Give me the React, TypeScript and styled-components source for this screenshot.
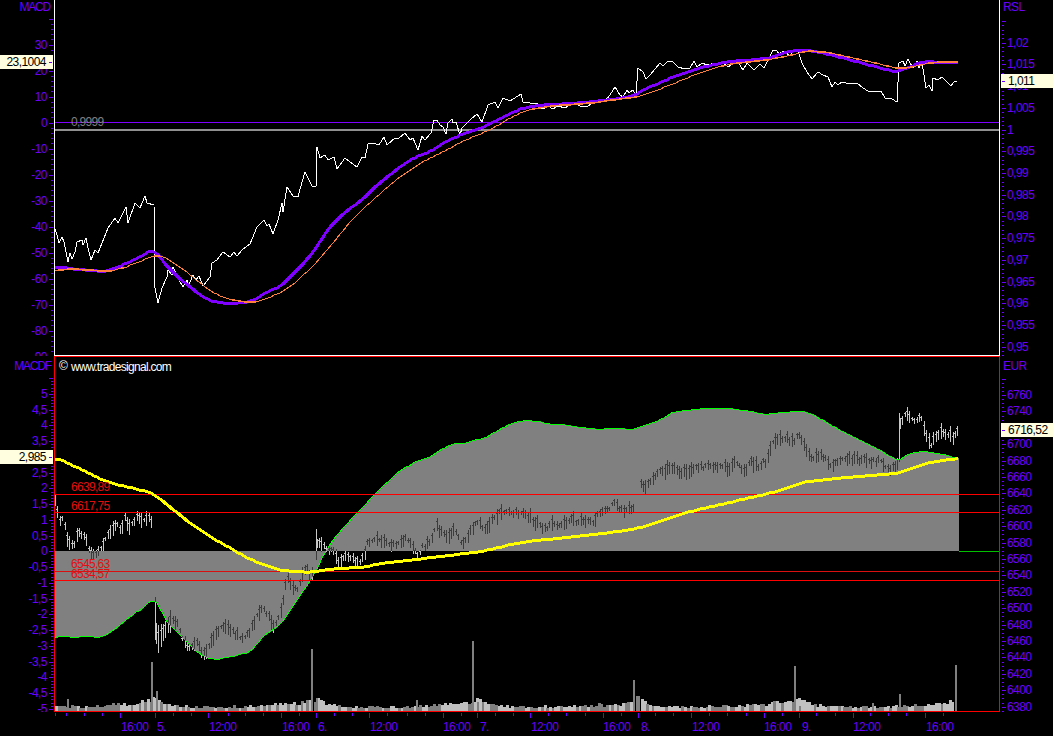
import { FC } from 'react';
import styled, { createGlobalStyle } from 'styled-components';

const PURPLE = '#6a00ff';
const VIOLET = '#8000ff';
const ORANGE = '#ff7f3f';
const AREA = '#808080';
const CREAM = '#ffffe0';
const FONT = '"Liberation Sans", Arial, sans-serif';

type Pt = [number, number];

const GlobalStyle = createGlobalStyle`
  html, body {
    margin: 0;
    background: #000;
    overflow: hidden;
  }
`;

const Screen = styled.div`
  display: grid;
  grid-template-rows: 356px 356px 24px;
  width: 1053px;
  height: 736px;
  background: #000;
`;

const Pane = styled.div`
  display: grid;
  grid-template-columns: 54px 946px 53px;
  min-height: 0;
`;

const ScaleColumn = styled.div`
  position: relative;
  overflow: hidden;
`;

const PlotFrame = styled.div<{ $edge: string; $top?: string; $bottom: string }>`
  border-left: 1px solid ${(p) => p.$edge};
  border-right: 1px solid ${(p) => p.$edge};
  border-top: ${(p) => (p.$top ? `1px solid ${p.$top}` : 'none')};
  border-bottom: 1px solid ${(p) => p.$bottom};
  min-height: 0;
`;

const Drawing = styled.svg`
  display: block;
  width: 100%;
  height: 100%;
`;

const ScaleText = styled.text<{ $tight?: boolean }>`
  font: 12px ${FONT};
  letter-spacing: ${(p) => (p.$tight ? '-1.2px' : '-0.55px')};
  fill: ${PURPLE};
`;

const PlotText = styled.text<{ $color: string }>`
  font: 12px ${FONT};
  letter-spacing: -0.7px;
  fill: ${(p) => p.$color};
`;

const Badge = styled.div<{ $side: 'left' | 'right'; $top: number }>`
  position: absolute;
  top: ${(p) => p.$top}px;
  height: 14px;
  display: flex;
  align-items: center;
  box-sizing: border-box;
  background: ${CREAM};
  color: #000;
  font: 12px/14px ${FONT};
  letter-spacing: -0.55px;
  ${(p) =>
    p.$side === 'left'
      ? 'left: 0; width: 53px; flex-direction: row-reverse; padding-right: 1px;'
      : 'left: 1px; right: 0; padding-left: 1px;'}
`;

const BadgeTick = styled.span<{ $side: 'left' | 'right' }>`
  width: 3px;
  height: 1px;
  flex: none;
  background: ${PURPLE};
  ${(p) => (p.$side === 'left' ? 'margin-left: 3px;' : 'margin-right: 3px;')}
`;

const pts = (a: Pt[]) => a.map((p) => p.join(',')).join(' ');

const WHITE_LINE: Pt[] = [
  [55, 229], [57, 235], [59, 243], [62, 237], [64, 242], [68, 262], [70, 253], [72, 259], [75, 252], [77, 242],
  [82, 240], [83, 245], [86, 238], [88, 248], [91, 260], [95, 250], [98, 253], [102, 243], [108, 228], [115, 218],
  [118, 223], [123, 213], [126, 207], [128, 223], [135, 203], [140, 208], [145, 196], [147, 203], [154, 205], [155, 288],
  [158, 303], [162, 288], [167, 277], [168, 270], [172, 275], [173, 267], [178, 278], [183, 287], [187, 280], [188, 287],
  [193, 275], [196, 280], [199, 276], [203, 286], [210, 277], [212, 263], [217, 260], [223, 252], [230, 257], [234, 252],
  [237, 256], [243, 249], [250, 244], [257, 227], [264, 220], [267, 226], [269, 224], [273, 234], [278, 220], [282, 203],
  [283, 212], [287, 187], [293, 196], [298, 197], [302, 182], [305, 172], [312, 186], [316, 186], [317, 147], [320, 158],
  [325, 155], [328, 160], [334, 157], [337, 169], [345, 158], [350, 162], [357, 167], [362, 157], [365, 158], [368, 144],
  [373, 143], [379, 145], [384, 137], [387, 145], [395, 138], [398, 139], [405, 133], [410, 140], [413, 138], [418, 150],
  [422, 136], [425, 140], [431, 133], [434, 120], [437, 120], [440, 125], [443, 127], [446, 134], [448, 123], [452, 119],
  [453, 123], [456, 122], [460, 135], [462, 128], [470, 120], [477, 114], [482, 122], [488, 105], [495, 102], [498, 108],
  [503, 98], [510, 101], [521, 94], [523, 102], [530, 103], [537, 103], [539, 108], [545, 108], [548, 106], [553, 109],
  [558, 106], [565, 108], [573, 103], [580, 106], [588, 106], [595, 101], [605, 101], [610, 95], [615, 87], [620, 95],
  [623, 97], [627, 90], [629, 93], [633, 90], [636, 95], [638, 68], [643, 72], [646, 79], [650, 75], [655, 69],
  [660, 63], [663, 66], [668, 61], [673, 62], [678, 67], [685, 69], [690, 68], [694, 61], [697, 67], [702, 63],
  [707, 65], [715, 63], [723, 63], [728, 67], [735, 62], [738, 62], [743, 70], [747, 63], [754, 70], [760, 64],
  [764, 68], [773, 50], [777, 51], [779, 54], [784, 51], [790, 56], [795, 49], [798, 51], [802, 63], [807, 72],
  [812, 79], [818, 72], [823, 75], [828, 77], [832, 87], [835, 82], [838, 85], [842, 82], [850, 84], [857, 83],
  [863, 88], [868, 91], [881, 91], [885, 98], [892, 99], [897, 102], [899, 63], [903, 61], [905, 66], [908, 59],
  [913, 68], [917, 61], [919, 68], [922, 62], [926, 88], [929, 85], [932, 91], [933, 78], [938, 80], [942, 77],
  [947, 82], [951, 86], [954, 82], [957, 81],
];

const VIOLET_RAW: Pt[] = [
  [55, 267], [63, 267], [73, 269], [93, 270], [103, 272], [113, 269], [127, 263], [140, 257], [154, 248], [160, 258],
  [173, 273], [190, 287], [203, 297], [213, 302], [230, 303], [250, 302], [258, 298], [268, 291], [280, 287], [290, 277],
  [302, 265], [315, 250], [323, 237], [333, 223], [348, 210], [363, 199], [377, 185], [393, 172], [415, 157], [430, 152],
  [443, 143], [460, 135], [477, 130], [493, 122], [507, 115], [523, 108], [538, 105], [573, 103], [597, 101], [613, 99],
  [633, 96], [647, 88], [660, 83], [672, 77], [687, 72], [707, 66], [730, 61], [760, 59], [773, 57], [787, 52],
  [800, 49], [820, 52], [847, 59], [873, 66], [897, 72], [913, 66], [923, 61], [940, 62], [958, 62],
];

const ORANGE_RAW: Pt[] = [
  [55, 271], [67, 269], [93, 270], [107, 272], [120, 269], [137, 263], [150, 257], [158, 255], [167, 258], [183, 269],
  [200, 283], [217, 295], [233, 300], [243, 302], [258, 302], [280, 293], [293, 285], [317, 262], [337, 238], [353, 218],
  [373, 200], [393, 182], [420, 163], [443, 152], [463, 141], [490, 130], [510, 118], [527, 110], [550, 106], [593, 103],
  [620, 99], [637, 97], [653, 92], [670, 85], [687, 78], [707, 70], [730, 64], [767, 60], [787, 56], [807, 51],
  [827, 52], [853, 58], [880, 64], [900, 69], [913, 67], [923, 64], [940, 62], [958, 62],
];

const MACDF_RAW: Pt[] = [
  [55, 637], [62, 636], [73, 637], [88, 636], [95, 637], [102, 637], [110, 633], [120, 625], [128, 618], [138, 611],
  [142, 609], [148, 603], [154, 598], [157, 603], [167, 622], [183, 638], [197, 652], [208, 658], [218, 659], [233, 656],
  [250, 652], [265, 635], [282, 623], [297, 600], [313, 577], [325, 552], [335, 537], [357, 513], [377, 492], [398, 472],
  [415, 462], [428, 458], [440, 450], [455, 443], [465, 443], [487, 437], [497, 431], [512, 423], [527, 420], [537, 421],
  [550, 424], [560, 424], [580, 427], [597, 429], [613, 428], [635, 429], [640, 427], [660, 420], [673, 412], [687, 410],
  [707, 408], [727, 408], [743, 410], [765, 414], [783, 412], [802, 411], [810, 413], [843, 432], [880, 450], [898, 461],
  [910, 453], [923, 451], [937, 453], [958, 458],
];

const YELLOW_RAW: Pt[] = [
  [55, 457], [67, 463], [83, 470], [102, 480], [115, 484], [133, 488], [153, 493], [170, 507], [190, 523], [210, 537],
  [227, 546], [247, 558], [267, 566], [280, 570], [297, 571], [310, 572], [317, 571], [337, 568], [363, 567], [383, 563],
  [417, 559], [450, 555], [483, 551], [517, 543], [537, 540], [560, 538], [587, 535], [613, 532], [638, 528], [660, 522],
  [680, 514], [700, 509], [727, 503], [747, 498], [767, 494], [787, 488], [803, 482], [827, 479], [860, 476], [898, 473],
  [913, 468], [927, 463], [958, 458],
];

const PRICE_PATH: Pt[] = [
  [55, 502], [57, 510], [60, 520], [63, 517], [66, 537], [70, 543], [75, 543], [78, 530], [82, 535], [85, 538],
  [90, 552], [93, 555], [98, 552], [103, 543], [110, 532], [115, 523], [120, 530], [125, 517], [130, 530], [137, 513],
  [142, 522], [147, 515], [153, 523], [156, 640], [158, 640], [165, 630], [170, 620], [177, 623], [183, 643], [190, 647],
  [198, 640], [203, 657], [212, 640], [220, 628], [228, 630], [240, 637], [250, 632], [258, 613], [265, 610], [273, 627],
  [282, 607], [287, 577], [293, 587], [298, 588], [305, 567], [312, 577], [317, 543], [323, 547], [332, 550], [338, 563],
  [347, 555], [357, 563], [363, 558], [368, 540], [383, 540], [393, 545], [405, 538], [417, 553], [423, 547], [433, 537],
  [435, 525], [447, 538], [453, 528], [462, 543], [470, 532], [478, 520], [483, 532], [493, 517], [503, 512], [520, 513],
  [530, 518], [542, 527], [557, 525], [573, 520], [593, 522], [600, 513], [615, 503], [623, 512], [628, 507], [637, 512],
  [639, 482], [645, 488], [660, 472], [673, 468], [687, 473], [693, 467], [717, 465], [728, 468], [735, 462], [744, 472],
  [750, 462], [757, 467], [767, 460], [773, 440], [787, 438], [793, 442], [798, 435], [805, 448], [810, 460], [820, 455],
  [833, 465], [850, 458], [870, 462], [880, 460], [887, 468], [898, 468], [900, 420], [908, 415], [913, 422], [922, 418],
  [926, 437], [930, 445], [937, 433], [942, 432], [952, 437], [957, 431],
];

const makeRandom = (seed: number) => () => {
  seed = (seed * 16807) % 2147483647;
  return seed / 2147483647;
};

const lerp = (path: Pt[], x: number) => {
  for (let i = 1; i < path.length; i++) {
    if (x <= path[i][0]) {
      const [x0, y0] = path[i - 1];
      const [x1, y1] = path[i];
      return y0 + ((y1 - y0) * (x - x0)) / (x1 - x0);
    }
  }
  return path[path.length - 1][1];
};

// resample every 3px and average a little, the readings above are coarse
const smooth = (path: Pt[], radius = 2): Pt[] => {
  const first = path[0][0];
  const last = path[path.length - 1][0];
  const out: Pt[] = [];
  for (let x = first; x <= last; x += 3) {
    let sum = 0;
    let n = 0;
    for (let k = -radius; k <= radius; k++) {
      const sx = x + k * 3;
      if (sx < first || sx > last) continue;
      sum += lerp(path, sx);
      n++;
    }
    out.push([x, Math.round(sum / n)]);
  }
  out.push(path[path.length - 1]);
  return out;
};

const VIOLET_LINE = smooth(VIOLET_RAW);
const ORANGE_LINE = smooth(ORANGE_RAW);
const MACDF_CURVE = smooth(MACDF_RAW, 1);
const YELLOW_LINE = smooth(YELLOW_RAW);

const GAPS: Pt[] = [[152, 156], [312, 317], [635, 639], [896, 900]];

const buildPriceBars = () => {
  const rand = makeRandom(4711);
  let d = 'M155 597V640M899 413V462M316 529V560M897 458V470';
  for (let x = 55; x < 958; x += 2.4) {
    const px = Math.round(x);
    if (GAPS.some(([a, b]) => px > a && px < b)) continue;
    const mid = lerp(PRICE_PATH, x) + (rand() - 0.5) * 5;
    const half = px > 155 && px < 172 ? 8 + rand() * 8 : 2 + rand() * 6;
    const hi = Math.round(mid - half);
    const lo = Math.round(mid + half);
    d += `M${px} ${hi}V${lo}`;
    d += `M${px - 1} ${Math.round(mid - half / 2)}h1M${px} ${Math.round(mid + half / 2)}h1`;
  }
  return d;
};

type VolumeBar = { x: number; top: number; light: boolean };

const OPENS = [155, 316, 477, 638, 799];
const SPIKES: Record<number, number> = {
  67: 699, 151: 662, 156: 691, 311: 649, 316: 698, 416: 700, 472: 641, 477: 702,
  633: 680, 638: 696, 794: 666, 799: 706, 872: 703, 899: 694, 955: 665,
};

const buildVolume = () => {
  const rand = makeRandom(90210);
  const out: VolumeBar[] = [];
  for (let x = 55; x < 954; x += 2.7) {
    const px = Math.round(x);
    const open = [...OPENS].reverse().find((o) => o <= px) ?? -6;
    const t = (px - open) / 156;
    const h = 2.5 + rand() * 3 + 9 * Math.exp(-(px - open) / 10) + 6 * Math.pow(t, 5) * (0.6 + rand());
    const light = rand() < (t < 0.25 || t > 0.8 ? 0.7 : 0.3);
    out.push({ x: px, top: Math.round(711 - h), light });
  }
  Object.entries(SPIKES).forEach(([x, top]) => {
    out.push({ x: Number(x), top, light: false });
  });
  return out;
};

const PRICE_BARS = buildPriceBars();
const VOLUME = buildVolume();
const AREA_POINTS: Pt[] = [[55, 551], ...MACDF_CURVE, [959, 458], [959, 551]];

type ScaleProps = {
  side: 'left' | 'right';
  viewBox: string;
  title: string;
  titleAt: [number, number];
  labels: { text: string; y: number }[];
  firstTick: number;
  step: number;
  lastTick: number;
  majorEvery: number;
};

const Scale: FC<ScaleProps> = ({ side, viewBox, title, titleAt, labels, firstTick, step, lastTick, majorEvery }) => {
  const ticks: { y: number; major: boolean }[] = [];
  for (let i = 0; firstTick + i * step < lastTick; i++) {
    ticks.push({ y: Math.round(firstTick + i * step), major: i % majorEvery === 0 });
  }
  const left = side === 'left';
  return (
    <Drawing viewBox={viewBox} preserveAspectRatio="none">
      <ScaleText x={titleAt[0]} y={titleAt[1]} textAnchor={left ? 'end' : 'start'} $tight={left}>
        {title}
      </ScaleText>
      {ticks.map((t) => {
        const len = t.major ? 4 : 2;
        return (
          <rect
            key={t.y}
            x={left ? 53 - len : 1002}
            y={t.y}
            width={len}
            height={1}
            fill={PURPLE}
          />
        );
      })}
      {labels.map((l) => (
        <ScaleText key={l.text} x={left ? 47 : 1007} y={l.y + 4} textAnchor={left ? 'end' : 'start'}>
          {l.text}
        </ScaleText>
      ))}
    </Drawing>
  );
};

const comma = (v: number) => String(parseFloat(v.toFixed(3))).replace('.', ',');

const MACD_LABELS = Array.from({ length: 13 }, (_, i) => {
  const v = 30 - i * 10;
  return { text: comma(v), y: 122.5 - 2.6 * v };
});
const RSL_LABELS = Array.from({ length: 15 }, (_, i) => ({
  text: comma(1.02 - i * 0.005),
  y: 42.7 + i * 21.72,
}));
// the value badges cover "3" and "6720" completely
const MACDF_LABELS = Array.from({ length: 21 }, (_, i) => {
  const v = 5 - i * 0.5;
  return { text: comma(v), y: 551.3 - 31.5 * v };
}).filter((l) => l.text !== '3');
const EUR_LABELS = Array.from({ length: 20 }, (_, i) => ({
  text: String(6760 - i * 20),
  y: 395 + i * 16.4,
})).filter((l) => l.text !== '6720');

const MAJOR_TIME = [120, 155, 208, 281, 316, 369, 443, 477, 530, 603, 638, 691, 764, 799, 853, 925];
const MINOR_TIME = [
  55, 66, 84, 102, 173, 191, 228, 245, 263, 299, 334, 352, 387, 407, 425, 461, 495, 513, 548, 566, 585, 621, 655, 673,
  709, 727, 746, 782, 816, 835, 870, 888, 906, 943,
];
const TIME_LABELS: [string, number][] = [
  ['16:00', 121], ['5.', 157], ['12:00', 209], ['16:00', 282], ['6.', 318], ['12:00', 370], ['16:00', 443], ['7.', 480],
  ['12:00', 531], ['16:00', 603], ['8.', 641], ['12:00', 692], ['16:00', 764], ['9.', 802], ['12:00', 853], ['16:00', 926],
];

const TopPlot: FC = () => (
  <Drawing viewBox="55 0 944 355" preserveAspectRatio="none" shapeRendering="crispEdges">
    <rect x={55} y={122} width={944} height={1} fill={VIOLET} />
    <rect x={55} y={129} width={944} height={2} fill="#909090" />
    <PlotText x={71} y={126} $color="#808080">0,9999</PlotText>
    <polyline points={pts(WHITE_LINE)} fill="none" stroke="#fff" strokeWidth={1} />
    <polyline points={pts(VIOLET_LINE)} fill="none" stroke={VIOLET} strokeWidth={3} />
    <polyline points={pts(ORANGE_LINE)} fill="none" stroke={ORANGE} strokeWidth={1.2} />
  </Drawing>
);

const BottomPlot: FC = () => (
  <Drawing viewBox="55 357 944 354" preserveAspectRatio="none" shapeRendering="crispEdges">
    <defs>
      <clipPath id="area-clip">
        <polygon points={pts(AREA_POINTS)} />
      </clipPath>
    </defs>
    <polygon points={pts(AREA_POINTS)} fill={AREA} />
    <polyline points={pts(MACDF_CURVE)} fill="none" stroke="#00ff00" strokeWidth={1} />
    <rect x={959} y={551} width={40} height={1} fill="#00c000" />
    {VOLUME.map((v, i) => (
      <rect key={i} x={v.x} y={v.top} width={v.x in SPIKES ? 2 : 3} height={711 - v.top} fill={v.light ? '#c0c0c0' : AREA} />
    ))}
    <path d={PRICE_BARS} fill="none" stroke="#c8c8c8" strokeWidth={1} />
    <path d={PRICE_BARS} fill="none" stroke="#3c3c3c" strokeWidth={1} clipPath="url(#area-clip)" />
    <rect x={55} y={494} width={944} height={1} fill="#ff0000" />
    <rect x={55} y={512} width={944} height={1} fill="#ff0000" />
    <rect x={55} y={571} width={944} height={1} fill="#d81010" />
    <rect x={55} y={580} width={944} height={1} fill="#ff0000" />
    <polyline points={pts(YELLOW_LINE)} fill="none" stroke="#ffff00" strokeWidth={3} />
    <PlotText x={71} y={491} $color="#e01010">6639,89</PlotText>
    <PlotText x={71} y={510} $color="#e01010">6617,75</PlotText>
    <PlotText x={71} y={568} $color="#e01010">6545,63</PlotText>
    <PlotText x={71} y={578} $color="#e01010">6534,57</PlotText>
    <PlotText x={59} y={370} $color="#fff">©</PlotText>
    <PlotText x={71} y={371} $color="#fff">www.tradesignal.com</PlotText>
  </Drawing>
);

const TimeAxis: FC = () => (
  <Drawing viewBox="0 712 1053 24" preserveAspectRatio="none">
    {MINOR_TIME.map((x) => (
      <rect key={x} x={x} y={713} width={1} height={3} fill={PURPLE} />
    ))}
    {MAJOR_TIME.map((x) => (
      <rect key={x} x={x} y={713} width={1} height={5} fill={PURPLE} />
    ))}
    {TIME_LABELS.map(([text, x]) => (
      <ScaleText key={`${text}-${x}`} x={x} y={731}>
        {text}
      </ScaleText>
    ))}
  </Drawing>
);

export default function App() {
  return (
    <>
      <GlobalStyle />
      <Screen>
        <Pane>
          <ScaleColumn>
            <Scale
              side="left"
              viewBox="0 0 54 356"
              title="MACD"
              titleAt={[50, 11]}
              labels={MACD_LABELS}
              firstTick={18.5}
              step={5.2}
              lastTick={356}
              majorEvery={5}
            />
            <Badge $side="left" $top={55}>
              <BadgeTick $side="left" />
              23,1004
            </Badge>
          </ScaleColumn>
          <PlotFrame $edge="#fff" $bottom="#fff">
            <TopPlot />
          </PlotFrame>
          <ScaleColumn>
            <Scale
              side="right"
              viewBox="1000 0 53 356"
              title="RSL"
              titleAt={[1003, 11]}
              labels={RSL_LABELS}
              firstTick={21}
              step={4.344}
              lastTick={356}
              majorEvery={5}
            />
            <Badge $side="right" $top={74}>
              <BadgeTick $side="right" />
              1,011
            </Badge>
          </ScaleColumn>
        </Pane>
        <Pane>
          <ScaleColumn>
            <Scale
              side="left"
              viewBox="0 356 54 356"
              title="MACDF"
              titleAt={[51, 370]}
              labels={MACDF_LABELS}
              firstTick={378.1}
              step={3.15}
              lastTick={711}
              majorEvery={5}
            />
            <Badge $side="left" $top={94}>
              <BadgeTick $side="left" />
              2,985
            </Badge>
          </ScaleColumn>
          <PlotFrame $edge="#ff0000" $top="#ff0000" $bottom="#ff0000">
            <BottomPlot />
          </PlotFrame>
          <ScaleColumn>
            <Scale
              side="right"
              viewBox="1000 356 53 356"
              title="EUR"
              titleAt={[1003, 370]}
              labels={EUR_LABELS}
              firstTick={378.6}
              step={4.1}
              lastTick={711}
              majorEvery={4}
            />
            <Badge $side="right" $top={67}>
              <BadgeTick $side="right" />
              6716,52
            </Badge>
          </ScaleColumn>
        </Pane>
        <TimeAxis />
      </Screen>
    </>
  );
}
